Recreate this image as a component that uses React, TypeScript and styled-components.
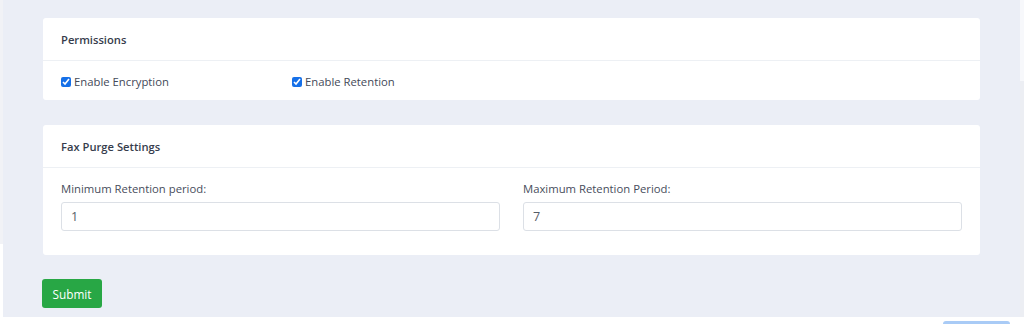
import styled, { createGlobalStyle } from "styled-components";

const GlobalStyle = createGlobalStyle`
  html, body {
    margin: 0;
    padding: 0;
    background: #ffffff;
  }
  body {
    font-family: "Open Sans", "Noto Sans", sans-serif;
    color: #4a5060;
  }
  * {
    box-sizing: border-box;
  }
`;

const Shell = styled.div`
  display: flex;
  width: 1024px;
  height: 324px;
  overflow: hidden;
`;

const SideEdge = styled.div`
  width: 3px;
  height: 244px;
  background: #f1f2f6;
  flex-shrink: 0;
`;

const Column = styled.div`
  flex: 1;
  display: flex;
  flex-direction: column;
`;

const Main = styled.main`
  background: #ebeef6;
  padding: 18px 40px 9px 40px;
  display: flex;
  flex-direction: column;
  gap: 25px;
`;

const RightEdge = styled.div`
  width: 4px;
  flex-shrink: 0;
  display: flex;
  flex-direction: column;
`;

const EdgeTop = styled.div`
  height: 81px;
  background: #f7f8fb;
`;

const EdgeRest = styled.div`
  height: 236px;
  background: #eceef3;
`;

const Card = styled.section`
  background: #ffffff;
  border-radius: 3px;
`;

const CardHeader = styled.header`
  padding: 13px 18px 12px;
  border-bottom: 1px solid #edf0f4;
`;

const CardTitle = styled.h6`
  margin: 0;
  font-size: 11.2px;
  line-height: 17px;
  font-weight: 600;
  color: #363c4c;
`;

const CardBody = styled.div<{ $bottom: number }>`
  padding: 12px 18px ${(p) => p.$bottom}px;
`;

const CheckGrid = styled.div`
  display: grid;
  grid-template-columns: repeat(4, 1fr);
  column-gap: 23px;
`;

const CheckLabel = styled.label`
  display: flex;
  align-items: center;
  gap: 3px;
  font-size: 11.3px;
  line-height: 17px;
  color: #434958;
`;

const Check = styled.input`
  width: 10px;
  height: 10px;
  margin: 0;
  accent-color: #1670e8;
`;

const FieldRow = styled.div`
  display: grid;
  grid-template-columns: 1fr 1fr;
  column-gap: 23px;
`;

const Field = styled.div`
  display: flex;
  flex-direction: column;
`;

const FieldLabel = styled.label`
  font-size: 11.3px;
  line-height: 17px;
  margin-bottom: 5px;
  color: #474d5c;
`;

const TextInput = styled.input`
  height: 29px;
  border: 1px solid #dce0e6;
  border-radius: 3px;
  padding: 0 9px;
  font-family: "Open Sans", "Noto Sans", sans-serif;
  font-size: 12.6px;
  color: #565c68;
  background: #ffffff;
  outline: none;
`;

const Actions = styled.div`
  display: flex;
  margin: -1px 0 0 -1px;
`;

const SubmitButton = styled.button`
  width: 60px;
  height: 29px;
  border: 0;
  border-radius: 3px;
  background: #28a745;
  color: #ffffff;
  font-family: "Open Sans", "Noto Sans", sans-serif;
  font-size: 11.8px;
  padding: 0;
`;

const Footer = styled.footer`
  display: flex;
  justify-content: flex-end;
  padding: 4px 10px 0 0;
`;

const GhostButton = styled.div`
  width: 67px;
  height: 20px;
  border-radius: 3px;
  background: #a9cbf6;
`;

export default function App() {
  return (
    <>
      <GlobalStyle />
      <Shell>
        <SideEdge />
        <Column>
          <Main>
            <Card>
              <CardHeader>
                <CardTitle>Permissions</CardTitle>
              </CardHeader>
              <CardBody $bottom={10}>
                <CheckGrid>
                  <CheckLabel>
                    <Check type="checkbox" defaultChecked />
                    Enable Encryption
                  </CheckLabel>
                  <CheckLabel>
                    <Check type="checkbox" defaultChecked />
                    Enable Retention
                  </CheckLabel>
                </CheckGrid>
              </CardBody>
            </Card>

            <Card>
              <CardHeader>
                <CardTitle>Fax Purge Settings</CardTitle>
              </CardHeader>
              <CardBody $bottom={24}>
                <FieldRow>
                  <Field>
                    <FieldLabel>Minimum Retention period:</FieldLabel>
                    <TextInput defaultValue="1" />
                  </Field>
                  <Field>
                    <FieldLabel>Maximum Retention Period:</FieldLabel>
                    <TextInput defaultValue="7" />
                  </Field>
                </FieldRow>
              </CardBody>
            </Card>

            <Actions>
              <SubmitButton type="button">Submit</SubmitButton>
            </Actions>
          </Main>
          <Footer>
            <GhostButton />
          </Footer>
        </Column>
        <RightEdge>
          <EdgeTop />
          <EdgeRest />
        </RightEdge>
      </Shell>
    </>
  );
}
